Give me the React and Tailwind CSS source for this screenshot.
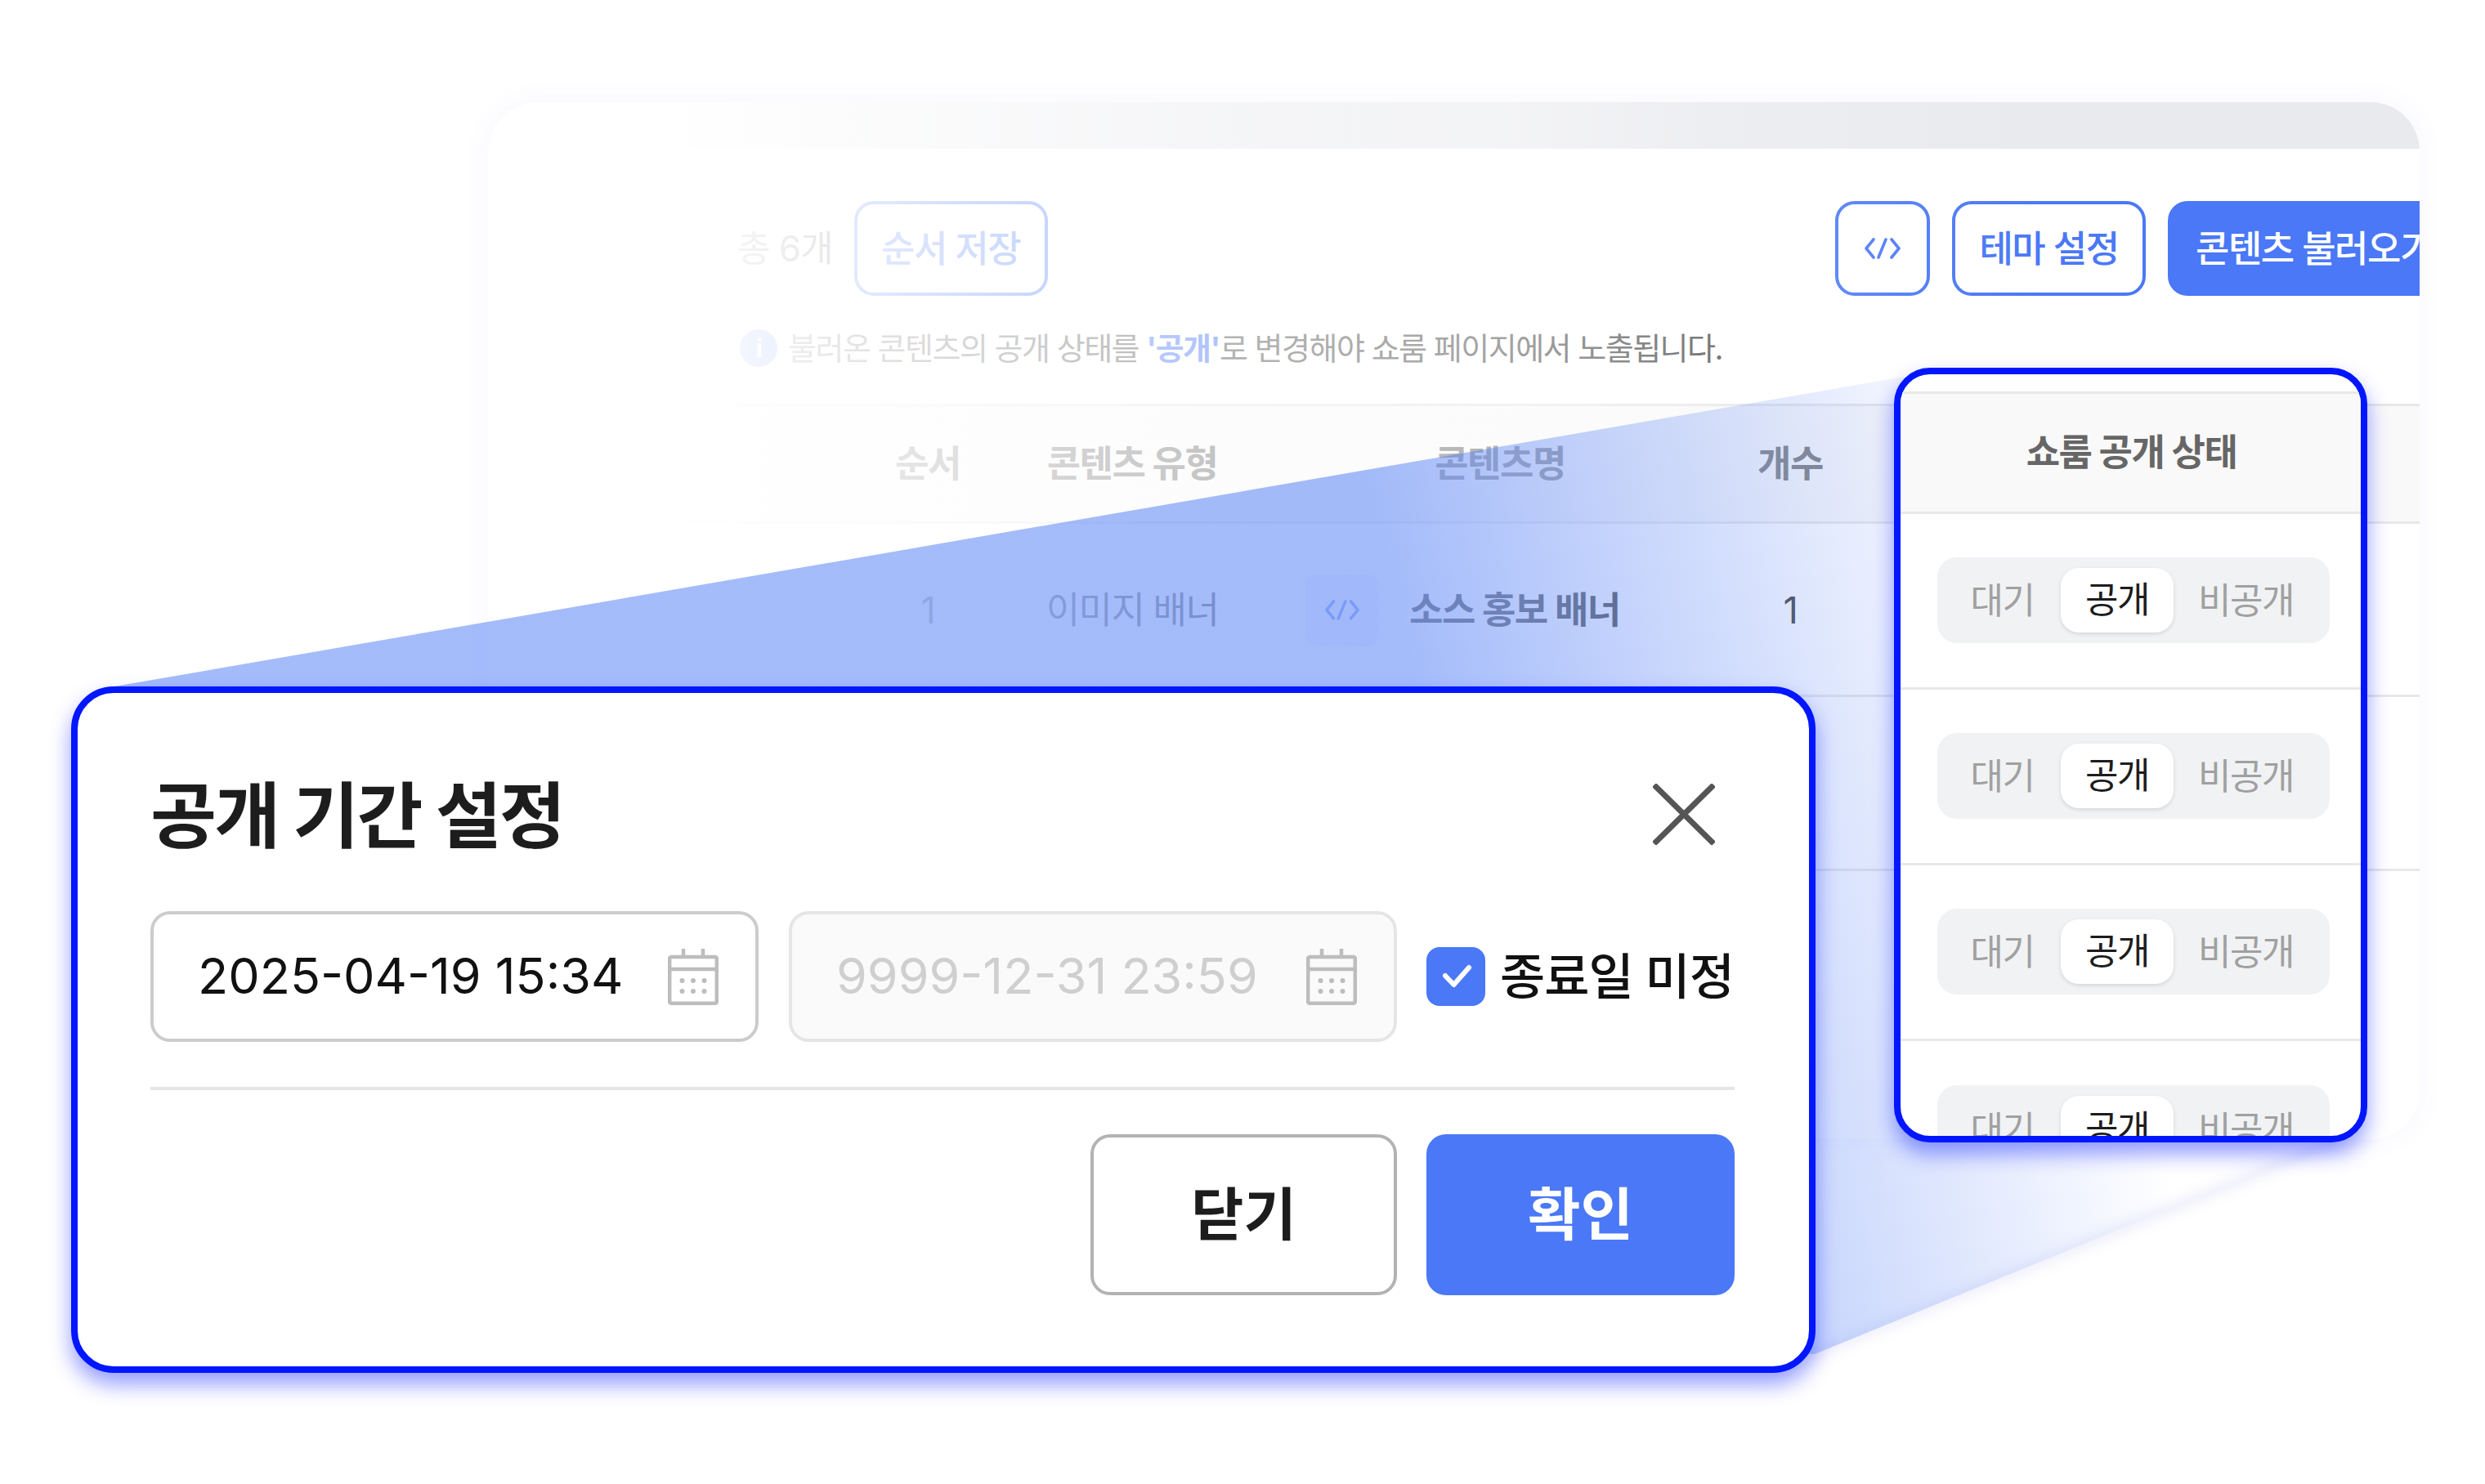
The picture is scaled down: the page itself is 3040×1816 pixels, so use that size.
import React from 'react';

const FONT = 'font-["Inter","Noto_Sans_CJK_KR",sans-serif]';

const CalendarIcon = ({ className }) => (
  <svg viewBox="0 0 62 69" className={className} fill="none" stroke="currentColor" strokeWidth="4.5">
    <rect x="2.2" y="10" width="57.6" height="56.8" rx="2" />
    <path d="M2 25h58M19 0v10M43 0v10" />
    <g fill="currentColor" stroke="none">
      <circle cx="17.5" cy="39" r="3" />
      <circle cx="31" cy="39" r="3" />
      <circle cx="44.5" cy="39" r="3" />
      <circle cx="17.5" cy="52" r="3" />
      <circle cx="31" cy="52" r="3" />
      <circle cx="44.5" cy="52" r="3" />
    </g>
  </svg>
);

const CodeIcon = ({ className }) => (
  <svg viewBox="0 0 44 26" className={className} fill="none" stroke="currentColor" strokeWidth="3.6" strokeLinecap="round" strokeLinejoin="round">
    <path d="M11 2 2 13l9 11M26 2l-9 22M33 2l9 11-9 11" />
  </svg>
);

const StatusToggle = () => (
  <div className="flex h-[105px] w-[480px] shrink-0 items-center rounded-[24px] bg-[#f1f2f4] pt-[2px] text-[44px] tracking-[-1.5px] text-[#a0a0a0]">
    <span className="w-[151px] pl-[8px] text-center">대기</span>
    <span className="flex h-[79px] w-[138px] -translate-y-[1px] items-center justify-center rounded-[22px] bg-white text-[#1d1d1d] shadow-[0_2px_5px_rgba(0,0,0,0.12)]">공개</span>
    <span className="flex-1 pr-[14px] text-center">비공개</span>
  </div>
);

const BackCard = () => (
  <div className="absolute left-[597px] top-[125px] flex h-[1269px] w-[2363px] flex-col overflow-hidden rounded-[60px] bg-white shadow-[0_0_36px_rgba(90,90,255,0.05)]">
    <div className="h-[57px] shrink-0 bg-[#e9eaee]" />

    <div className="mt-[64px] flex h-[116px] shrink-0 items-center pl-[305px]">
      <span className="text-[44px] tracking-[-1px] text-[#555]">총 6개</span>
      <button className="ml-[26px] h-[116px] w-[237px] rounded-[24px] border-4 border-[#4a78f6] pt-[2px] text-[45px] font-medium tracking-[-1.5px] text-[#4a78f6]">순서 저장</button>
      <button className="ml-auto flex h-[116px] w-[116px] items-center justify-center rounded-[24px] border-4 border-[#4a78f6] text-[#4a78f6]">
        <CodeIcon className="w-[44px]" />
      </button>
      <button className="ml-[27px] h-[116px] w-[237px] rounded-[24px] border-4 border-[#4a78f6] pt-[2px] text-[45px] font-medium tracking-[-1.5px] text-[#4a78f6]">테마 설정</button>
      <button className="ml-[27px] h-[116px] w-[308px] overflow-hidden whitespace-nowrap rounded-l-[24px] bg-[#4a78f6] pl-[34px] pt-[2px] text-left text-[45px] font-medium tracking-[-1.5px] text-white">콘텐츠 불러오기</button>
    </div>

    <div className="mt-[40px] flex h-[48px] shrink-0 items-center pl-[308px] text-[38px] tracking-[-1.5px] text-[#555]">
      <span className="mr-[13px] flex h-[46px] w-[46px] items-center justify-center rounded-full bg-[#4a78f6] text-[30px] font-bold text-white">i</span>
      <span>불러온 콘텐츠의 공개 상태를 <b className="text-[#4a78f6]">'공개'</b>로 변경해야 쇼룸 페이지에서 노출됩니다.</span>
    </div>

    <div className="mt-[44px] grid h-[147px] shrink-0 grid-cols-[190px_310px_590px_120px] items-center border-y-[3px] border-[#e8e8e8] bg-[#f9f9f9] pl-[443px] text-center text-[45px] font-bold tracking-[-1.5px] text-[#777]">
      <span>순서</span>
      <span>콘텐츠 유형</span>
      <span>콘텐츠명</span>
      <span>개수</span>
    </div>

    <div className="grid h-[212px] shrink-0 grid-cols-[190px_310px_590px_120px] items-center border-b-[3px] border-[#e8e8e8] pl-[443px] pt-[2px] text-center text-[45px] tracking-[-1.5px] text-[#333]">
      <span>1</span>
      <span>이미지 배너</span>
      <div className="flex items-center pl-[57px]">
        <span className="flex h-[88px] w-[89px] items-center justify-center rounded-[12px] bg-[#f0f3fd] text-[#4a78f6]">
          <CodeIcon className="w-[42px]" />
        </span>
        <b className="ml-[38px] text-[#222]">소스 홍보 배너</b>
      </div>
      <span>1</span>
    </div>
    <div className="h-[213px] shrink-0 border-b-[3px] border-[#e8e8e8]" />

    {/* left side of the card fades out */}
    <div className="pointer-events-none absolute inset-0 bg-[linear-gradient(90deg,rgba(255,255,255,1)_210px,rgba(255,255,255,0.56)_900px,rgba(255,255,255,0.46)_1250px,rgba(255,255,255,0.2)_1503px,rgba(255,255,255,0)_1903px)]" />
  </div>
);

const Funnel = () => (
  <svg viewBox="0 0 3040 1816" className="pointer-events-none absolute left-0 top-0 h-[1816px] w-[3040px]">
    <defs>
      <linearGradient id="funnel" gradientUnits="userSpaceOnUse" x1="1700" y1="700" x2="2450" y2="531">
        <stop offset="0" stopColor="#4a78f6" stopOpacity="0.5" />
        <stop offset="1" stopColor="#4a78f6" stopOpacity="0" />
      </linearGradient>
      <filter id="edge" x="-10%" y="-10%" width="120%" height="120%">
        <feGaussianBlur stdDeviation="7" />
      </filter>
    </defs>
    <path d="M2210 1661 2860 1396" fill="none" stroke="#6a70d8" strokeOpacity="0.14" strokeWidth="10" filter="url(#edge)" />
    <path d="M140 840 2330 461 2860 1395 2220 1657H140Z" fill="url(#funnel)" />
  </svg>
);

const StatusPanel = () => (
  <div className="absolute left-[2317px] top-[450px] flex h-[948px] w-[579px] flex-col overflow-hidden rounded-[44px] border-8 border-[#0016ff] bg-white shadow-[0_14px_26px_rgba(0,22,255,0.42)]">
    <div className="h-[21px] shrink-0" />
    <div className="flex h-[150px] shrink-0 items-center justify-center border-y-[3px] border-[#e8e8e8] bg-[#f9f9f9] pl-[2px] text-[45px] font-bold tracking-[-1.5px] text-[#666]">
      쇼룸 공개 상태
    </div>
    {[0, 1, 2].map((row) => (
      <div key={row} className="flex h-[215px] shrink-0 items-center justify-center border-b-[3px] border-[#e8e8e8] pb-[2px] pl-[7px]">
        <StatusToggle />
      </div>
    ))}
    <div className="flex justify-center pl-[7px] pt-[54px]">
      <StatusToggle />
    </div>
  </div>
);

const DateField = ({ value, disabled }) => (
  <div className={`flex h-[160px] w-[744px] shrink-0 items-center justify-between rounded-[24px] border-4 pl-[54px] pr-[45px] text-[61px] ${disabled ? 'border-[#e5e5e5] bg-[#fafafa] text-[#cfcfcf]' : 'border-[#cccccc] bg-white text-[#111]'}`}>
    <span>{value}</span>
    <CalendarIcon className="w-[62px] text-[#bdbdbd]" />
  </div>
);

const PeriodModal = () => (
  <div className="absolute left-[87px] top-[840px] flex h-[840px] w-[2134px] flex-col rounded-[52px] border-8 border-[#0016ff] bg-white pl-[89px] pr-[91px] pt-[100px] shadow-[0_14px_26px_rgba(0,22,255,0.42)]">
    <div className="flex h-[96px] items-center justify-between">
      <h2 className="pt-[3px] text-[88px] font-bold tracking-[-2.8px] text-[#1d1d1d]">공개 기간 설정</h2>
      <svg viewBox="0 0 76 75" className="mr-[24px] w-[76px]" fill="none" stroke="#555" strokeWidth="7" strokeLinecap="square">
        <path d="M4 4l68 67M72 4 4 71" />
      </svg>
    </div>

    <div className="mt-[71px] flex items-center">
      <DateField value="2025-04-19 15:34" />
      <div className="ml-[37px]">
        <DateField value="9999-12-31 23:59" disabled />
      </div>
      <span className="ml-[36px] flex h-[72px] w-[72px] shrink-0 items-center justify-center rounded-[16px] bg-[#4a78f6]">
        <svg viewBox="0 0 72 72" className="w-[72px]" fill="none" stroke="#fff" strokeWidth="6" strokeLinecap="round" strokeLinejoin="round">
          <path d="M23 35l10.500 11L52 25" />
        </svg>
      </span>
      <span className="ml-[18px] whitespace-nowrap text-[60px] font-medium tracking-[-1px] text-[#111]">종료일 미정</span>
    </div>

    <div className="mt-[55px] h-1 bg-[#e5e5e5]" />

    <div className="mt-[54px] flex justify-end gap-[36px]">
      <button className="h-[197px] w-[375px] rounded-[24px] border-4 border-[#b3b3b3] text-[70px] font-bold text-[#1d1d1d]">닫기</button>
      <button className="h-[197px] w-[377px] rounded-[24px] bg-[#4a78f6] text-[70px] font-bold text-white">확인</button>
    </div>
  </div>
);

export default function App() {
  return (
    <div className={`relative h-[1816px] w-[3040px] overflow-hidden bg-white ${FONT}`}>
      <BackCard />
      <Funnel />
      <StatusPanel />
      <PeriodModal />
    </div>
  );
}
